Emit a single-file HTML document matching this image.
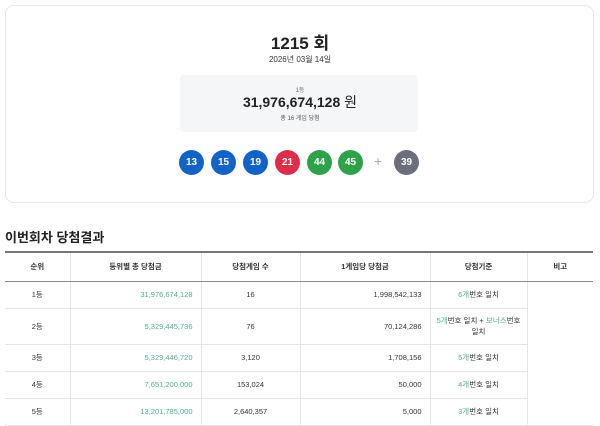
<!DOCTYPE html>
<html><head><meta charset="utf-8"><style>
*{margin:0;padding:0;box-sizing:border-box}
body{width:600px;height:426px;overflow:hidden;background:#fff;font-family:"Liberation Sans","Noto Sans CJK KR",sans-serif;color:#222;position:relative}
.card{position:absolute;left:5px;top:5px;width:589px;height:198px;border:1px solid #e8e8e8;border-radius:9px}
.abs{position:absolute;text-align:center;left:0;width:600px}
.t1{top:29px;font-size:17px;font-weight:bold}
.t2{top:54px;font-size:8px;color:#333}
.gbox{position:absolute;left:180px;top:75px;width:238px;height:57px;background:#f5f6f8;border-radius:4px}
.ball{position:absolute;top:150px;width:25px;height:25px;border-radius:50%;color:#fff;font-size:10px;font-weight:bold;text-align:center;line-height:25px}
.b{background:#1262c8}.r{background:#dc2e49}.g{background:#2ea24a}.k{background:#6b6f7b}
h2{position:absolute;left:5px;top:227px;font-size:13px;font-weight:bold}
table{position:absolute;left:5px;top:251px;width:588px;border-collapse:collapse;font-size:7.5px;color:#333}
th,td{border-bottom:1px solid #e6e6e6;border-right:1px solid #e6e6e6;text-align:center}
th:last-child,td:last-child{border-right:none}
thead tr{border-top:2px solid #777}
th{font-weight:bold;height:29px;border-bottom:1px solid #888}
td{height:27px}
.n{text-align:right;padding-right:8px}
.gr{color:#4fae94}
</style></head><body>
<div class="card"></div>
<div class="abs t1">1215 회</div>
<div class="abs t2">2026년 03월 14일</div>
<div class="gbox"></div>
<div class="abs" style="top:85px;font-size:6px;color:#666">1등</div>
<div class="abs" style="top:92px;font-size:14px;font-weight:bold">31,976,674,128 <span style="font-weight:normal">원</span></div>
<div class="abs" style="top:113px;font-size:6px;color:#555">총 16 게임 당첨</div>
<div class="ball b" style="left:179px">13</div>
<div class="ball b" style="left:211px">15</div>
<div class="ball b" style="left:243px">19</div>
<div class="ball r" style="left:275px">21</div>
<div class="ball g" style="left:307px">44</div>
<div class="ball g" style="left:338px">45</div>
<div style="position:absolute;left:374px;top:153px;font-size:14px;color:#aaa">+</div>
<div class="ball k" style="left:394px">39</div>
<h2>이번회차 당첨결과</h2>
<table>
<thead><tr><th style="width:65px">순위</th><th style="width:131px">등위별 총 당첨금</th><th style="width:99px">당첨게임 수</th><th style="width:130px">1게임당 당첨금</th><th style="width:97px">당첨기준</th><th>비고</th></tr></thead>
<tbody>
<tr><td>1등</td><td class="n gr">31,976,674,128</td><td>16</td><td class="n">1,998,542,133</td><td><span class="gr">6개</span>번호 일치</td><td rowspan="5" style="border-left:1px solid #e6e6e6"></td></tr>
<tr><td style="height:36px">2등</td><td class="n gr">5,329,445,736</td><td>76</td><td class="n">70,124,286</td><td><span class="gr">5개</span>번호 일치 + <span class="gr">보너스</span>번호<br>일치</td></tr>
<tr><td>3등</td><td class="n gr">5,329,446,720</td><td>3,120</td><td class="n">1,708,156</td><td><span class="gr">5개</span>번호 일치</td></tr>
<tr><td>4등</td><td class="n gr">7,651,200,000</td><td>153,024</td><td class="n">50,000</td><td><span class="gr">4개</span>번호 일치</td></tr>
<tr><td>5등</td><td class="n gr">13,201,785,000</td><td>2,640,357</td><td class="n">5,000</td><td><span class="gr">3개</span>번호 일치</td></tr>
</tbody></table>
</body></html>
